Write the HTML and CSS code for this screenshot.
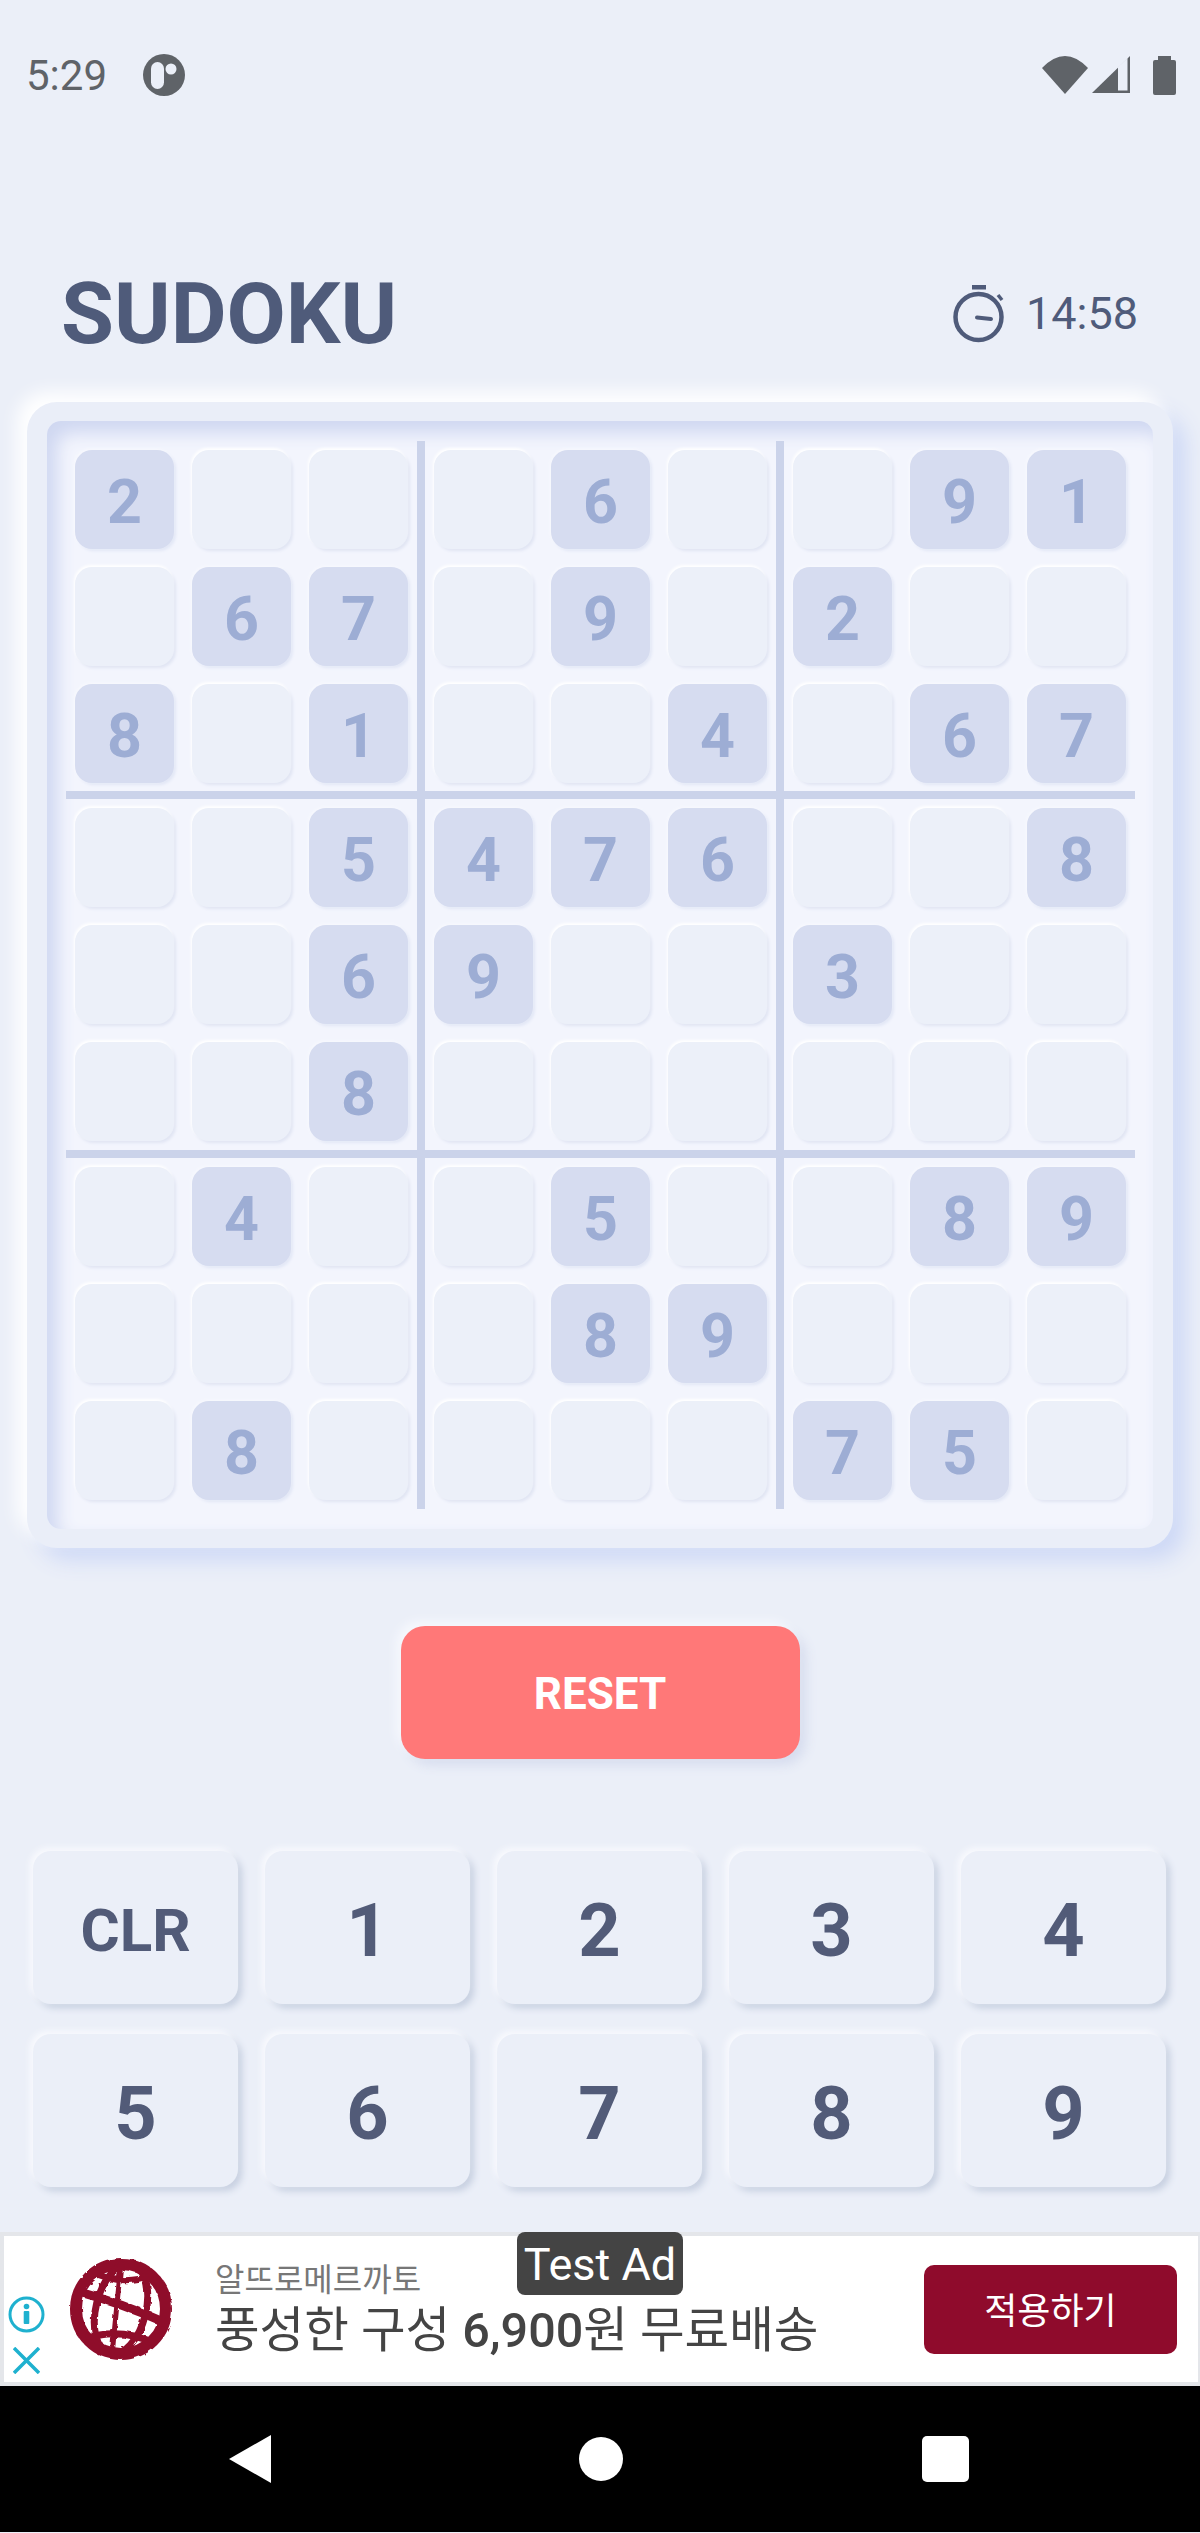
FILE: index.html
```html
<!DOCTYPE html>
<html lang="ko">
<head>
    <meta charset="UTF-8">
    <meta name="viewport" content="width=device-width, initial-scale=1.0">
    <title>Sudoku</title>
    <link rel="stylesheet" href="styles.css">
</head>
<body>
    <div class="status-bar">
        <div class="status-left">
            <span class="status-time">5:29</span>
            <svg class="status-app" viewBox="0 0 42 42">
                <circle cx="21" cy="21" r="21" fill="#5f6368"/>
                <rect x="8" y="8" width="13" height="27" rx="6.5" fill="#ebeff8"/>
                <circle cx="28" cy="15" r="5.5" fill="#ebeff8"/>
            </svg>
        </div>
        <div class="status-right">
            <svg class="icon-wifi" viewBox="0 0 46 38">
                <path d="M0 12 Q23 -12 46 12 L23 38 Z" fill="#5f6368"/>
            </svg>
            <svg class="icon-signal" viewBox="0 0 38 38">
                <path d="M0 37 L38 0 V37 Z" fill="#5f6368"/>
                <path d="M26 11 L35.500 2 V34.500 H26 Z" fill="#ebeff8"/>
            </svg>
            <svg class="icon-battery" viewBox="0 0 23 39">
                <path d="M5 0 H18 V4 H21 Q23 4 23 6 V37 Q23 39 21 39 H2 Q0 39 0 37 V6 Q0 4 2 4 H5 Z" fill="#5f6368"/>
            </svg>
        </div>
    </div>

    <div class="title-row">
        <h1 class="title">SUDOKU</h1>
        <div class="timer">
            <svg class="timer-icon" viewBox="0 0 60 64">
                <circle cx="29.500" cy="35" r="23" fill="none" stroke="#4f5b7a" stroke-width="4.500"/>
                <rect x="23" y="3" width="14" height="4.500" fill="#4f5b7a"/>
                <line x1="49" y1="13" x2="53" y2="18" stroke="#4f5b7a" stroke-width="3.500"/>
                <line x1="28" y1="35.500" x2="42" y2="37" stroke="#4f5b7a" stroke-width="4" stroke-linecap="round"/>
            </svg>
            <span>14:58</span>
        </div>
    </div>

    <div class="board">
        <div class="board-inner">
            <div class="grid">
                <div class="box">
                    <div class="cell given">2</div><div class="cell"></div><div class="cell"></div>
                    <div class="cell"></div><div class="cell given">6</div><div class="cell given">7</div>
                    <div class="cell given">8</div><div class="cell"></div><div class="cell given">1</div>
                </div>
                <div class="box">
                    <div class="cell"></div><div class="cell given">6</div><div class="cell"></div>
                    <div class="cell"></div><div class="cell given">9</div><div class="cell"></div>
                    <div class="cell"></div><div class="cell"></div><div class="cell given">4</div>
                </div>
                <div class="box">
                    <div class="cell"></div><div class="cell given">9</div><div class="cell given">1</div>
                    <div class="cell given">2</div><div class="cell"></div><div class="cell"></div>
                    <div class="cell"></div><div class="cell given">6</div><div class="cell given">7</div>
                </div>
                <div class="box">
                    <div class="cell"></div><div class="cell"></div><div class="cell given">5</div>
                    <div class="cell"></div><div class="cell"></div><div class="cell given">6</div>
                    <div class="cell"></div><div class="cell"></div><div class="cell given">8</div>
                </div>
                <div class="box">
                    <div class="cell given">4</div><div class="cell given">7</div><div class="cell given">6</div>
                    <div class="cell given">9</div><div class="cell"></div><div class="cell"></div>
                    <div class="cell"></div><div class="cell"></div><div class="cell"></div>
                </div>
                <div class="box">
                    <div class="cell"></div><div class="cell"></div><div class="cell given">8</div>
                    <div class="cell given">3</div><div class="cell"></div><div class="cell"></div>
                    <div class="cell"></div><div class="cell"></div><div class="cell"></div>
                </div>
                <div class="box">
                    <div class="cell"></div><div class="cell given">4</div><div class="cell"></div>
                    <div class="cell"></div><div class="cell"></div><div class="cell"></div>
                    <div class="cell"></div><div class="cell given">8</div><div class="cell"></div>
                </div>
                <div class="box">
                    <div class="cell"></div><div class="cell given">5</div><div class="cell"></div>
                    <div class="cell"></div><div class="cell given">8</div><div class="cell given">9</div>
                    <div class="cell"></div><div class="cell"></div><div class="cell"></div>
                </div>
                <div class="box">
                    <div class="cell"></div><div class="cell given">8</div><div class="cell given">9</div>
                    <div class="cell"></div><div class="cell"></div><div class="cell"></div>
                    <div class="cell given">7</div><div class="cell given">5</div><div class="cell"></div>
                </div>
            </div>
        </div>
    </div>

    <div class="reset-row">
        <button class="reset-button">RESET</button>
    </div>

    <div class="keypad">
        <button class="key key-clear">CLR</button>
        <button class="key">1</button>
        <button class="key">2</button>
        <button class="key">3</button>
        <button class="key">4</button>
        <button class="key">5</button>
        <button class="key">6</button>
        <button class="key">7</button>
        <button class="key">8</button>
        <button class="key">9</button>
    </div>

    <div class="ad">
        <span class="ad-badge">Test Ad</span>
        <div class="ad-controls">
            <svg class="ad-info" viewBox="0 0 37 37">
                <circle cx="18.500" cy="18.500" r="16.500" fill="none" stroke="#1fb1cf" stroke-width="3"/>
                <circle cx="18.500" cy="10.500" r="2.800" fill="#1fb1cf"/>
                <rect x="15.700" y="15" width="5.600" height="13" rx="1" fill="#1fb1cf"/>
            </svg>
            <svg class="ad-close" viewBox="0 0 27 27">
                <path d="M1 1 L26 26 M26 1 L1 26" stroke="#1fb1cf" stroke-width="3.500" fill="none"/>
            </svg>
        </div>
        <svg class="ad-logo" viewBox="0 0 106 108">
            <filter id="rough">
                <feTurbulence type="fractalNoise" baseFrequency="0.15" numOctaves="2" seed="4"/>
                <feDisplacementMap in="SourceGraphic" scale="3.500"/>
            </filter>
            <g filter="url(#rough)" fill="none" stroke="#8f0b2c">
                <circle cx="53" cy="54" r="45" fill="#fff" stroke-width="12"/>
                <ellipse cx="53" cy="54" rx="25" ry="46" transform="rotate(14 53 54)" stroke-width="7"/>
                <path d="M8 36 Q53 48 98 68" stroke-width="9"/>
                <path d="M22 16 Q53 32 84 20" stroke-width="6"/>
                <path d="M18 84 Q50 72 86 88" stroke-width="7"/>
                <path d="M53 8 L44 100" stroke-width="5"/>
            </g>
        </svg>
        <div class="ad-text">
            <div class="ad-brand">알뜨로메르까토</div>
            <div class="ad-headline">풍성한 구성 <span class="ad-price">6,900</span>원 무료배송</div>
        </div>
        <button class="ad-button">적용하기</button>
    </div>

    <div class="nav-bar">
        <svg class="nav-back" viewBox="0 0 42 48">
            <path d="M42 0 V48 L0 24 Z" fill="#fff"/>
        </svg>
        <span class="nav-home"></span>
        <span class="nav-recent"></span>
    </div>
</body>
</html>
```

FILE: styles.css
```css
* {
    box-sizing: border-box;
}

body {
    width: 1200px;
    height: 2533px;
    margin: 0;
    overflow: hidden;
    font-family: Roboto, "Noto Sans CJK KR", sans-serif;
    background: #ebeff8;
    color: #4f5b7a;
}

button {
    font-family: inherit;
    border: none;
    padding: 0;
}

/* status bar */
.status-bar {
    display: flex;
    justify-content: space-between;
    align-items: center;
    height: 150px;
    padding: 0 24px 0 26px;
}

.status-left {
    display: flex;
    align-items: center;
    gap: 36px;
}

.status-time {
    font-size: 42px;
    font-weight: 400;
    color: #5f6368;
}

.status-app {
    width: 42px;
    height: 42px;
}

.status-right {
    display: flex;
    align-items: center;
}

.icon-wifi {
    width: 46px;
    height: 38px;
}

.icon-signal {
    width: 38px;
    height: 38px;
    margin-left: 4px;
}

.icon-battery {
    width: 23px;
    height: 39px;
    margin-left: 23px;
}

/* title */
.title-row {
    display: flex;
    justify-content: space-between;
    align-items: center;
    height: 125px;
    margin-top: 100px;
    padding: 2px 62px 0 61px;
    margin-bottom: 27px;
}

.title {
    margin: 0;
    font-size: 86px;
    font-weight: 700;
    color: #4f5b7a;
}

.timer {
    display: flex;
    align-items: center;
    gap: 17px;
    font-size: 45px;
}

.timer-icon {
    width: 60px;
    height: 64px;
}

/* board */
.board {
    width: 1146px;
    height: 1146px;
    margin: 0 27px;
    padding: 19px 20px;
    background: #eaeef8;
    border-radius: 30px;
    box-shadow: -10px -10px 18px #ffffff, 12px 12px 22px #cdd8f6;
}

.board-inner {
    height: 100%;
    padding: 20px 19px;
    background: #f3f5fd;
    border-radius: 14px;
    box-shadow: inset 10px 12px 18px #cfd7f1;
}

.grid {
    display: grid;
    grid-template-columns: 359px 359px 351px;
    grid-template-rows: 358px 359px 351px;
}

.box {
    display: grid;
    grid-template-columns: repeat(3, 117px);
    grid-template-rows: repeat(3, 117px);
    border-right: 8px solid #cbd3ea;
    border-bottom: 8px solid #cbd3ea;
}

.box:nth-child(3n) {
    border-right: none;
}

.box:nth-child(n+7) {
    border-bottom: none;
}

.cell {
    display: flex;
    align-items: center;
    justify-content: center;
    margin: 9px;
    padding-top: 4px;
    background: #ecf0f9;
    border-radius: 17px;
    box-shadow: -1px -2px 3px #ffffff, 2px 2px 3px #e1e5f3;
    font-size: 61px;
    font-weight: 700;
    color: #9dadd4;
}

.cell.given {
    background: #d6dcf0;
    box-shadow: -1px -1px 3px #f8f9fe, 2px 2px 3px #e2e7f6;
}

/* reset */
.reset-row {
    display: flex;
    justify-content: center;
    margin-top: 78px;
}

.reset-button {
    width: 399px;
    height: 133px;
    padding-top: 2px;
    background: #ff7878;
    border-radius: 24px;
    box-shadow: -5px -5px 10px #f6f8fd, 6px 6px 12px #d6dcee;
    font-size: 44px;
    font-weight: 700;
    color: #fff;
}

/* keypad */
.keypad {
    display: grid;
    grid-template-columns: repeat(5, 205px);
    grid-auto-rows: 153px;
    column-gap: 27px;
    row-gap: 30px;
    margin: 92px 32px 0 33px;
}

.key {
    padding-top: 5px;
    background: #ebeff8;
    border-radius: 18px;
    box-shadow: -3px -3px 6px #f9fafe, 4px 4px 7px #c6cfe0;
    font-size: 74px;
    font-weight: 700;
    color: #525b78;
}

.key-clear {
    font-size: 60px;
}

/* ad */
.ad {
    position: relative;
    display: flex;
    align-items: center;
    height: 154px;
    margin-top: 45px;
    padding: 0 21px 0 4px;
    background: #fff;
    border: 4px solid #e4e6ea;
    border-right-width: 2px;
}

.ad-badge {
    position: absolute;
    top: -4px;
    left: 513px;
    width: 166px;
    height: 63px;
    background: #444;
    border-radius: 8px;
    font-size: 45px;
    line-height: 66px;
    text-align: center;
    color: #fff;
}

.ad-controls {
    display: flex;
    flex-direction: column;
    align-items: center;
    align-self: flex-end;
    gap: 14px;
    width: 37px;
    padding-bottom: 8px;
}

.ad-info {
    width: 37px;
    height: 37px;
}

.ad-close {
    width: 27px;
    height: 27px;
}

.ad-logo {
    width: 106px;
    height: 108px;
    margin-left: 23px;
}

.ad-text {
    flex: 1;
    margin-left: 41px;
}

.ad-brand {
    font-size: 32px;
    line-height: 44px;
    color: #777;
}

.ad-headline {
    font-size: 48.5px;
    line-height: 58px;
    color: #444;
}

.ad-price {
    font-weight: 500;
}

.ad-button {
    width: 253px;
    height: 89px;
    padding-bottom: 2px;
    background: #8f0b2c;
    border-radius: 10px;
    font-size: 36px;
    color: #fff;
}

/* nav bar */
.nav-bar {
    display: flex;
    justify-content: space-between;
    align-items: center;
    height: 146px;
    padding: 0 231px 0 229px;
    background: #000;
}

.nav-back {
    width: 42px;
    height: 48px;
}

.nav-home {
    width: 44px;
    height: 44px;
    margin-left: 8px;
    background: #fff;
    border-radius: 50%;
}

.nav-recent {
    width: 47px;
    height: 46px;
    background: #fff;
    border-radius: 5px;
}
```
